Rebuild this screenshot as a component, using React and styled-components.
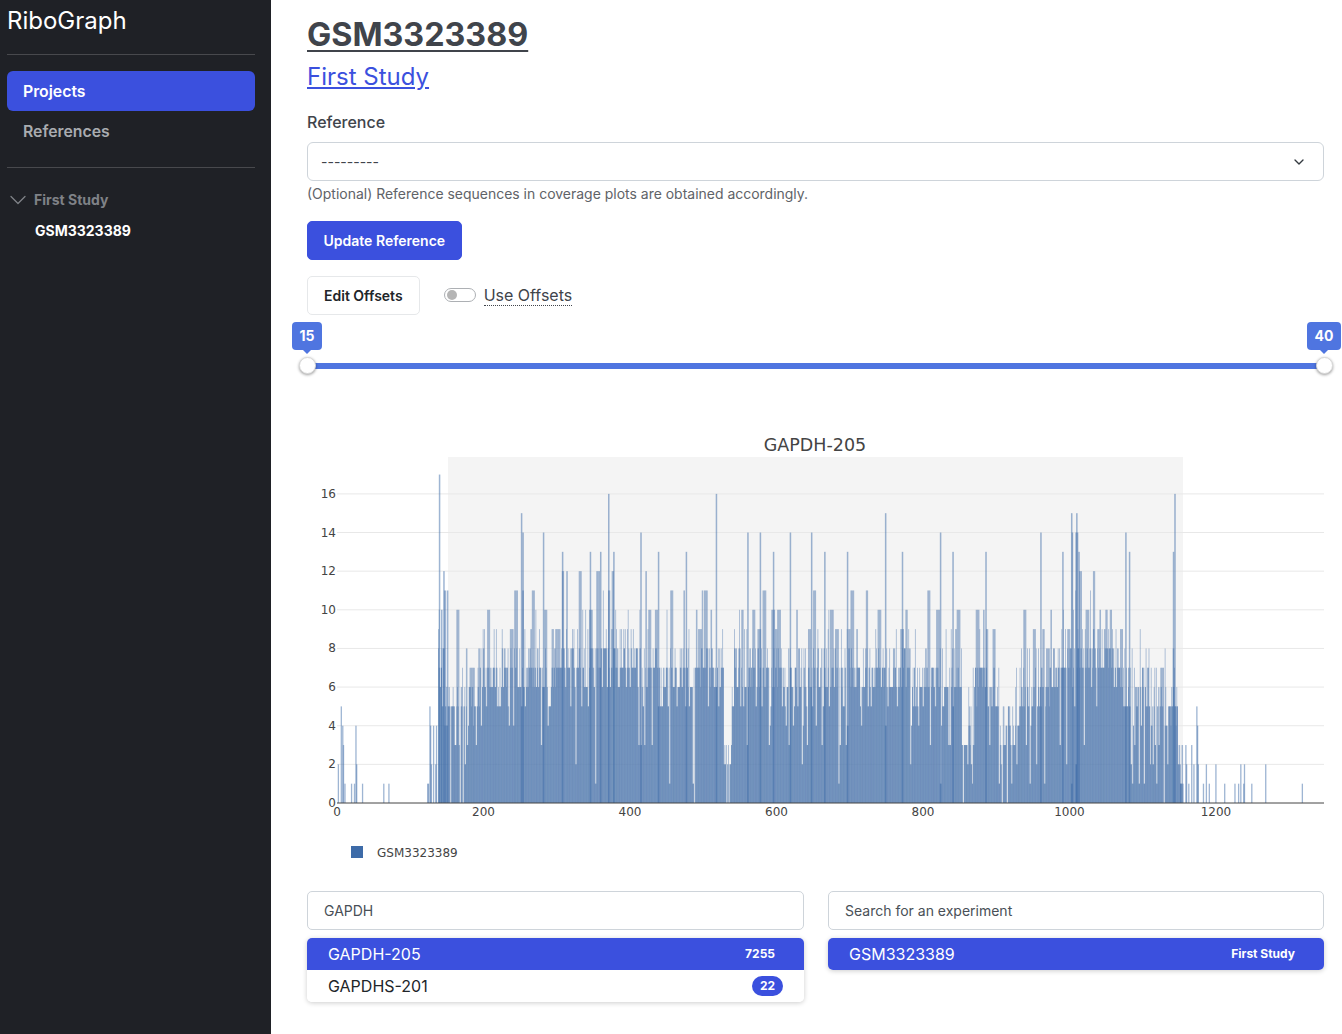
import React from "react";
import styled, { createGlobalStyle } from "styled-components";
import { ChevronDown } from "lucide-react";

const GlobalStyle = createGlobalStyle`
  * { box-sizing: border-box; }
  html, body { margin: 0; padding: 0; background: #fff; }
  body { font-family: Inter, "Liberation Sans", sans-serif; color: #40444b; }
`;

const BLUE = "#3b50de";
const SLIDER = "#4f75e0";

const Page = styled.div`
  display: flex;
  width: 1342px;
  height: 1034px;
  overflow: hidden;
`;

const Sidebar = styled.aside`
  flex: 0 0 271px;
  background: #1f2126;
  padding: 0 16px 0 7px;
`;

const Logo = styled.div`
  color: #fff;
  font-size: 24px;
  line-height: 42px;
  height: 55px;
  border-bottom: 1px solid #48494d;
`;

const NavList = styled.nav`
  padding: 16px 0;
  border-bottom: 1px solid #48494d;
`;

const NavItem = styled.div`
  height: 40px;
  padding: 1px 0 0 16px;
  line-height: 39px;
  border-radius: 6px;
  font-size: 15.8px;
  font-weight: 600;
  color: ${({ $active }) => ($active ? "#fff" : "#a9acb0")};
  background: ${({ $active }) => ($active ? BLUE : "transparent")};
`;

const Tree = styled.div`
  padding-top: 21px;
`;

const TreeHead = styled.div`
  display: flex;
  align-items: center;
  gap: 2px;
  height: 20px;
  color: #7f8287;
  font-size: 14px;
  font-weight: 700;
`;

const TreeChevron = styled(ChevronDown)`
  margin: 1px 0 0 -3px;
  flex: none;
`;

const TreeLeaf = styled.div`
  margin: 13px 0 0 28px;
  color: #fff;
  font-size: 14px;
  font-weight: 700;
  line-height: 17px;
`;

const Main = styled.main`
  flex: 1;
  padding: 0 18px 0 36px;
  min-width: 0;
`;

const Title = styled.h1`
  margin: 14px 0 0;
  font-size: 32.3px;
  line-height: 42px;
  font-weight: 700;
  color: #40444b;
  text-decoration: underline;
  text-decoration-thickness: 2px;
  text-underline-offset: 4px;
`;

const StudyLink = styled.a`
  display: block;
  font-size: 24px;
  line-height: 42px;
  color: ${BLUE};
  text-decoration: underline;
`;

const Label = styled.div`
  margin-top: 12px;
  height: 24px;
  font-size: 16px;
  line-height: 24px;
  font-weight: 500;
`;

const SelectBox = styled.div`
  margin-top: 8px;
  height: 39px;
  display: flex;
  align-items: center;
  justify-content: space-between;
  padding: 0 16px 0 13px;
  border: 1px solid #ced4da;
  border-radius: 6px;
  font-size: 14px;
  color: #40444b;
`;

const Help = styled.div`
  margin-top: 4px;
  font-size: 13.97px;
  line-height: 18px;
  color: #5f6368;
`;

const Button = styled.div`
  display: inline-flex;
  align-items: center;
  justify-content: center;
  height: 39px;
  padding: 0 ${({ $primary }) => ($primary ? "15.5px" : "16px")};
  border-radius: 5px;
  font-size: 14px;
  font-weight: 600;
  color: ${({ $primary }) => ($primary ? "#fff" : "#212529")};
  background: ${({ $primary }) => ($primary ? BLUE : "#fff")};
  border: 1px solid ${({ $primary }) => ($primary ? BLUE : "#e6e8ea")};
`;

const UpdateRow = styled.div`
  margin-top: 18px;
  display: flex;
`;

const OffsetRow = styled.div`
  margin-top: 16px;
  display: flex;
  align-items: center;
  gap: 24px;
`;

const Toggle = styled.span`
  display: inline-flex;
  align-items: center;
  gap: 8px;
`;

const ToggleTrack = styled.span`
  width: 32px;
  height: 14px;
  margin-top: -1px;
  border: 1px solid #adb0b4;
  border-radius: 7px;
  padding-left: 2px;
  display: flex;
  align-items: center;
  &::before {
    content: "";
    width: 10px;
    height: 10px;
    border-radius: 50%;
    background: #b5b5b5;
  }
`;

const ToggleText = styled.span`
  font-size: 16px;
  line-height: 20px;
  color: #40444b;
  border-bottom: 1px dotted #40444b;
`;

const Slider = styled.div`
  position: relative;
  margin-top: 48px;
  height: 6px;
  border-radius: 3px;
  background: ${SLIDER};
`;

const Handle = styled.span`
  position: absolute;
  top: -6px;
  ${({ $end }) => ($end ? "right: -9px;" : "left: -8px;")}
  width: 17px;
  height: 17px;
  border-radius: 50%;
  background: #fff;
  border: 1px solid #d9d9d9;
  box-shadow: 0 1px 3px rgba(0, 0, 0, 0.4);
`;

const Bubble = styled.span`
  position: absolute;
  top: -41px;
  ${({ $end }) => ($end ? "right: -17px; width: 34px;" : "left: -15px; width: 30px;")}
  height: 28px;
  border-radius: 4px;
  background: ${SLIDER};
  color: #fff;
  font-size: 14px;
  font-weight: 700;
  line-height: 28px;
  text-align: center;
  &::after {
    content: "";
    position: absolute;
    left: 50%;
    bottom: -4px;
    margin-left: -4px;
    border: 4px solid transparent;
    border-bottom: 0;
    border-top-color: ${SLIDER};
  }
`;

const ChartWrap = styled.div`
  margin-top: 61px;
  height: 445px;
  svg {
    display: block;
  }
`;

const Columns = styled.div`
  margin-top: 16px;
  display: grid;
  grid-template-columns: 497px 496px;
  gap: 24px;
`;

const Search = styled.div`
  height: 39px;
  line-height: 37px;
  padding-left: 16px;
  border: 1px solid #ced4da;
  border-radius: 5px;
  font-size: 14px;
  color: #495057;
`;

const List = styled.div`
  margin-top: 8px;
  border-radius: 5px;
  overflow: hidden;
  box-shadow: 0 1px 5px rgba(0, 0, 0, 0.2);
`;

const Row = styled.div`
  height: 32px;
  display: flex;
  align-items: center;
  justify-content: space-between;
  padding: 0 21px 0 21px;
  font-size: 16px;
  color: ${({ $active }) => ($active ? "#fff" : "#212529")};
  background: ${({ $active }) => ($active ? BLUE : "#fff")};
`;

const Badge = styled.span`
  font-size: 12px;
  font-weight: 700;
  line-height: 20px;
  min-width: 31px;
  text-align: center;
  padding: 0 8px;
  border-radius: 10px;
  color: #fff;
  background: ${({ $plain }) => ($plain ? "transparent" : BLUE)};
`;

// chart maths, all in svg pixels
const X0 = 30;
const Y0 = 373;
const UX = 0.7325;
const UY = 19.32;

function rng(seed) {
  let a = seed;
  return () => {
    a = (a + 0x6d2b79f5) | 0;
    let t = Math.imul(a ^ (a >>> 15), 1 | a);
    t = (t + Math.imul(t ^ (t >>> 7), 61 | t)) ^ t;
    return ((t ^ (t >>> 14)) >>> 0) / 4294967296;
  };
}

const toUnit = (px) => Math.round((px - 337) / UX);

const VALLEYS = [
  [438, 445, 7.4],
  [445, 480, 5.4],
  [480, 560, 7],
  [560, 660, 7.8],
  [660, 724, 7],
  [724, 732, 2.6],
  [732, 860, 7],
  [860, 910, 7],
  [910, 962, 6.6],
  [962, 972, 3.6],
  [972, 1000, 6.4],
  [1000, 1020, 4],
  [1020, 1050, 6],
  [1050, 1120, 7.8],
  [1120, 1150, 6.4],
  [1150, 1178, 5.4],
  [1178, 1184, 1.8],
];

const PEAKS = {
  439: 17, 441: 10, 443: 12, 445: 11, 447: 11, 521: 15, 522: 14, 543: 14, 562: 13, 590: 13, 600: 13,
  608: 16, 613: 13, 640: 14, 658: 13, 686: 13, 716: 16, 747: 14, 760: 14, 773: 13, 790: 14, 811: 14,
  824: 13, 847: 13, 885: 15, 902: 13, 940: 14, 952: 13, 985: 13, 1040: 14, 1062: 13, 1071: 15, 1072: 14,
  1075: 14, 1076: 15, 1077: 14, 1078: 13, 1125: 14, 1129: 13, 1173: 13, 1174: 16,
};

const SINGLES = {
  338: 2, 341: 5, 342: 4, 343: 3, 344: 1, 351: 1, 354: 1, 355: 4, 356: 2, 362: 1, 383: 1, 388: 1, 427: 1, 428: 1,
  429: 5, 430: 4, 431: 2, 433: 4, 435: 2, 436: 4, 1180: 1, 1182: 1, 1185: 3, 1186: 2, 1188: 1, 1191: 3, 1193: 2,
  1196: 5, 1197: 4, 1198: 2, 1203: 1, 1206: 2, 1209: 1, 1215: 2, 1224: 1, 1234: 1, 1238: 1, 1240: 2, 1243: 1,
  1244: 2, 1251: 1, 1265: 2, 1302: 1,
};

// each bar is [unit, height, width]: a pale layer, a darker layer under it, then the spikes on top
function buildBars() {
  const rand = rng(3323389);
  const bars = [];
  VALLEYS.forEach(([from, to, mean]) => {
    const heights = [];
    let run = 0;
    let runHeight = 0;
    for (let u = toUnit(from); u < toUnit(to); u++) {
      if (run === 0 && mean > 5 && rand() < 0.12) {
        run = 2 + Math.floor(rand() * 4);
        runHeight = Math.round(mean + 1.5 + rand() * 3);
      }
      if (run > 0) {
        heights.push(runHeight);
        run--;
        continue;
      }
      const r = rand();
      let v = mean + (rand() + rand() + rand() - 1.5) * 2.4;
      if (r < 0.12) v -= 2 + rand() * 3;
      heights.push(Math.max(0, Math.min(12, Math.round(v))));
    }
    const start = toUnit(from);
    heights.forEach((h, i) => {
      const next = i + 1 < heights.length ? heights[i + 1] : h;
      const cap = Math.round(mean - 1 + rand() * 2);
      bars.push([start + i, h, UX + 0.02]);
      bars.push([start + i, Math.min(h, next, cap), UX + 0.02]);
    });
  });
  Object.entries(PEAKS).forEach(([px, h]) => bars.push([toUnit(+px), h, 1.5]));
  Object.entries(SINGLES).forEach(([px, h]) => bars.push([toUnit(+px), h, 1.3]));
  return bars;
}

const BARS = buildBars();
const Y_TICKS = [0, 2, 4, 6, 8, 10, 12, 14, 16];
const X_TICKS = [0, 200, 400, 600, 800, 1000, 1200];

const Chart = () => (
  <svg width="1017" height="445" viewBox="0 0 1017 445">
    <rect x="141" y="27" width="735" height="346" fill="#f4f4f4" />
    {Y_TICKS.slice(1).map((t) => (
      <line key={t} x1={X0} x2="1017" y1={Y0 - t * UY} y2={Y0 - t * UY} stroke="#e8e8e8" strokeWidth="1" />
    ))}
    {BARS.map(([u, h, w], i) => (
      <rect key={i} x={X0 + u * UX} y={Y0 - h * UY} width={w} height={h * UY} fill="#3d6ba8" fillOpacity="0.5" />
    ))}
    <line x1={X0} x2="1017" y1={Y0} y2={Y0} stroke="#444" strokeWidth="1" />
    <g fontFamily="'DejaVu Sans', sans-serif" fontSize="12" fill="#444">
      <text x="508" y="21" textAnchor="middle" fontSize="17.5">GAPDH-205</text>
      {Y_TICKS.map((t) => (
        <text key={t} x="29" y={Y0 - t * UY + 4} textAnchor="end">{t}</text>
      ))}
      {X_TICKS.map((t) => (
        <text key={t} x={X0 + t * UX} y={Y0 + 13} textAnchor="middle">{t}</text>
      ))}
      <rect x="44" y="416" width="12" height="12" fill="#3d6ba8" />
      <text x="70" y="427">GSM3323389</text>
    </g>
  </svg>
);

export default function App() {
  return (
    <Page>
      <GlobalStyle />
      <Sidebar>
        <Logo>RiboGraph</Logo>
        <NavList>
          <NavItem $active>Projects</NavItem>
          <NavItem>References</NavItem>
        </NavList>
        <Tree>
          <TreeHead>
            <TreeChevron size={28} strokeWidth={1.1} />
            First Study
          </TreeHead>
          <TreeLeaf>GSM3323389</TreeLeaf>
        </Tree>
      </Sidebar>
      <Main>
        <Title>GSM3323389</Title>
        <StudyLink>First Study</StudyLink>
        <Label>Reference</Label>
        <SelectBox>
          ---------
          <ChevronDown size={16} strokeWidth={2} color="#343a40" />
        </SelectBox>
        <Help>(Optional) Reference sequences in coverage plots are obtained accordingly.</Help>
        <UpdateRow>
          <Button $primary>Update Reference</Button>
        </UpdateRow>
        <OffsetRow>
          <Button>Edit Offsets</Button>
          <Toggle>
            <ToggleTrack />
            <ToggleText>Use Offsets</ToggleText>
          </Toggle>
        </OffsetRow>
        <Slider>
          <Bubble>15</Bubble>
          <Handle />
          <Bubble $end>40</Bubble>
          <Handle $end />
        </Slider>
        <ChartWrap>
          <Chart />
        </ChartWrap>
        <Columns>
          <div>
            <Search>GAPDH</Search>
            <List>
              <Row $active>
                GAPDH-205
                <Badge $plain>7255</Badge>
              </Row>
              <Row>
                GAPDHS-201
                <Badge>22</Badge>
              </Row>
            </List>
          </div>
          <div>
            <Search>Search for an experiment</Search>
            <List>
              <Row $active>
                GSM3323389
                <Badge $plain>First Study</Badge>
              </Row>
            </List>
          </div>
        </Columns>
      </Main>
    </Page>
  );
}
